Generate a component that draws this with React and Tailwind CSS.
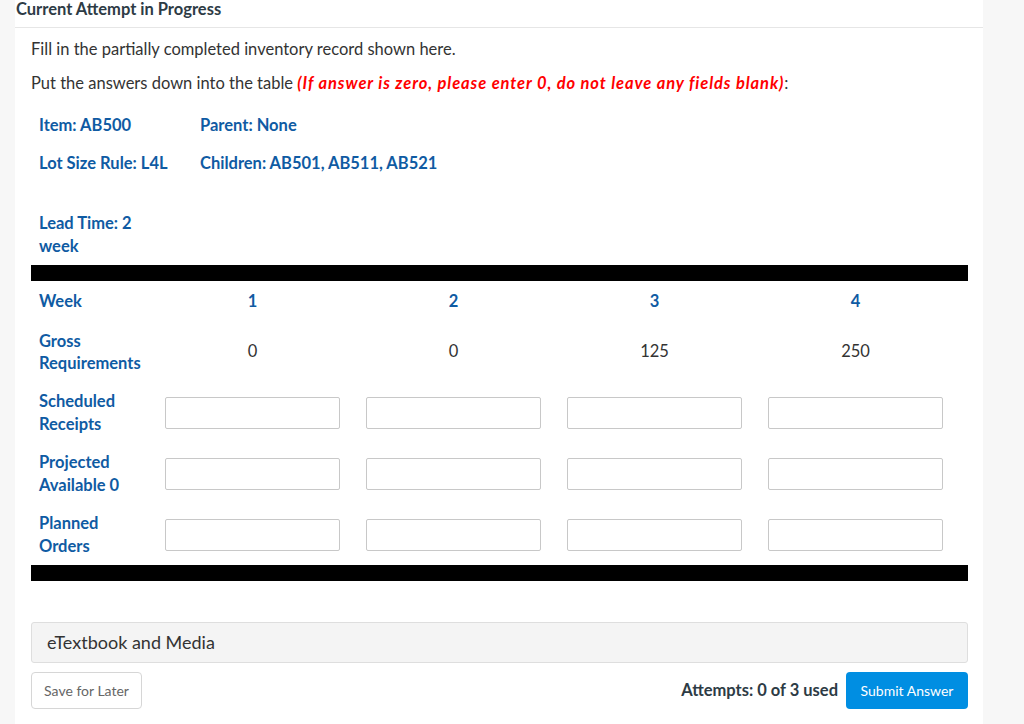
import React from "react";

const blue = "text-[#0f5ba3]";

function Label({ children }) {
  return (
    <div className={`pl-2 font-bold text-[16.5px] leading-[23px] ${blue}`}>{children}</div>
  );
}

function InputCell() {
  return (
    <div className="flex items-center justify-center">
      <input
        type="text"
        className="w-[175px] h-[32px] border border-[#c8c8c8] rounded-[2px] bg-white"
      />
    </div>
  );
}

export default function App() {
  const weeks = ["1", "2", "3", "4"];
  const gross = ["0", "0", "125", "250"];
  const inputRows = [
    ["Scheduled", "Receipts"],
    ["Projected", "Available 0"],
    ["Planned", "Orders"],
  ];
  return (
    <div
      className="flex w-[1024px] h-[724px] overflow-hidden bg-[#f7f7f7] text-[#333]"
      style={{ fontFamily: "Lato, 'Noto Sans', sans-serif" }}
    >
      <div className="w-[15px] shrink-0 bg-[#f7f7f7]" />
      <div className="w-[968px] shrink-0 bg-white flex flex-col">
        <div className="h-[28px] border-b border-[#e6e6e6] pl-[1px]">
          <div className="text-[16.5px] leading-[18px] font-bold text-[#2d3b45]">
            Current Attempt in Progress
          </div>
        </div>
        <div className="pl-[16px] pt-[10px]">
          <p className="text-[16.5px] leading-[22px] text-[#333]">
            Fill in the partially completed inventory record shown here.
          </p>
          <p className="mt-[12px] text-[16.5px] leading-[22px] text-[#333]">
            Put the answers down into the table{" "}
            <span className="font-bold italic text-[#ff0000] tracking-[0.9px]">
              (If answer is zero, please enter 0, do not leave any fields blank)
            </span>
            :
          </p>

          <div className="mt-[20px] grid grid-cols-[169px_auto] gap-y-[15px] w-max">
            <Label>Item: AB500</Label>
            <div className={`font-bold text-[16.5px] leading-[23px] ${blue}`}>Parent: None</div>
            <Label>Lot Size Rule: L4L</Label>
            <div className={`font-bold text-[16.5px] leading-[23px] ${blue}`}>
              Children: AB501, AB511, AB521
            </div>
          </div>

          <div className="mt-[37px] w-[120px]">
            <Label>Lead Time: 2 week</Label>
          </div>

          <div className="mt-[7px] w-[937px]">
            <div className="h-[16px] bg-black" />
            <div className="grid grid-cols-[121px_201px_201px_201px_201px]">
              <div className="h-[40px] flex items-center">
                <Label>Week</Label>
              </div>
              {weeks.map((w) => (
                <div
                  key={w}
                  className={`h-[40px] flex items-center justify-center font-bold text-[16.5px] ${blue}`}
                >
                  {w}
                </div>
              ))}

              <div className="h-[61px] flex items-center">
                <div className={`pl-2 font-bold text-[16.5px] leading-[22px] ${blue}`}>
                  Gross
                  <br />
                  Requirements
                </div>
              </div>
              {gross.map((g, i) => (
                <div
                  key={i}
                  className="h-[61px] flex items-center justify-center text-[16.5px] text-[#333]"
                >
                  {g}
                </div>
              ))}

              {inputRows.map(([a, b]) => (
                <React.Fragment key={a}>
                  <div className="h-[61px] flex items-center">
                    <Label>
                      {a}
                      <br />
                      {b}
                    </Label>
                  </div>
                  {weeks.map((w) => (
                    <InputCell key={w} />
                  ))}
                </React.Fragment>
              ))}
            </div>
            <div className="h-[16px] bg-black" />
          </div>

          <div className="mt-[41px] w-[937px] h-[41px] bg-[#f4f4f4] border border-[#dedede] rounded-[3px] flex items-center pl-[15px]">
            <span className="text-[18px] text-[#333]">eTextbook and Media</span>
          </div>

          <div className="mt-[9px] w-[937px] flex items-center justify-between">
            <button className="w-[111px] h-[37px] border border-[#d6d6d6] rounded-[4px] bg-white text-[14px] text-[#666]">
              Save for Later
            </button>
            <div className="flex items-center gap-[8px]">
              <span className="text-[16.5px] font-bold text-[#2d3b45]">Attempts: 0 of 3 used</span>
              <button className="w-[122px] h-[37px] rounded-[4px] bg-[#008ee2] text-white text-[14px]">
                Submit Answer
              </button>
            </div>
          </div>
        </div>
      </div>
      <div className="flex-1 bg-[#f7f7f7]" />
    </div>
  );
}
